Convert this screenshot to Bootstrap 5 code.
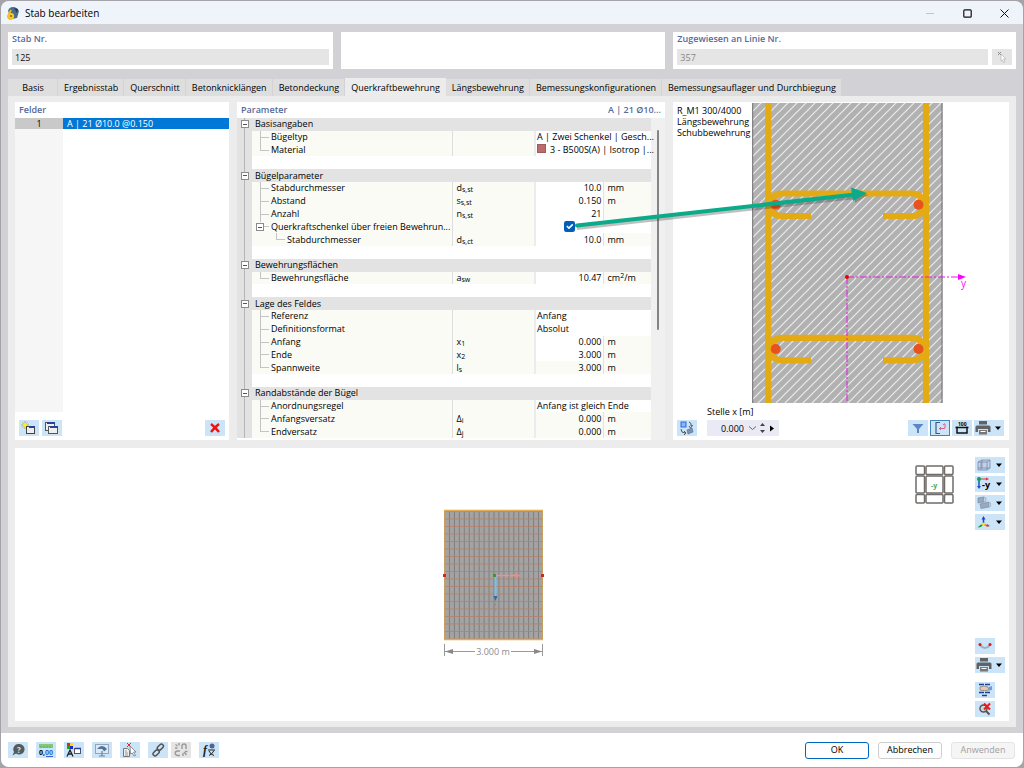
<!DOCTYPE html>
<html lang="de">
<head>
<meta charset="utf-8">
<meta name="viewport" content="width=device-width, initial-scale=1">
<title>Stab bearbeiten</title>
<link href="https://cdn.jsdelivr.net/npm/bootstrap@5.3.0/dist/css/bootstrap.min.css" rel="stylesheet">
<style>
  body { background: #a3a3a8; font-family: "Open Sans", "Noto Sans", sans-serif; font-size: 9px; line-height: 12px; color: #000; }
  .win { min-height: calc(100vh - 2px); margin: 1px; background: #d1d1d6; border-radius: 8px; overflow: hidden; }
  .title-strip { height: 23px; background: #eff4fb; padding-left: 6px; font-size: 10px; gap: 6px; }
  .title-strip button { width: 37px; height: 23px; border: 0; background: none; padding: 0; margin-left: -6px; }
  .title-strip button:first-of-type { margin-left: 0; }
  .win-buttons { display: flex; }
  .win-buttons button { margin-left: 0; }
  .cap { color: #566a9c; font-weight: 600; }
  .grid-top { display: grid; grid-template-columns: 325fr 325fr 343fr; column-gap: 8px; margin: 8px 7px 9px; }
  .box { background: #fff; }
  .grid-top .box { min-height: 37px; padding: 1px 4px 3px; }
  .fld { height: 16px; border: 0; background: #e5e5e5; padding: 0 3px; min-width: 0; color: #111; }
  .fld:disabled { color: #888; }
  .icon-btn { width: 20px; height: 16px; border: 0; padding: 0; background: #cce4f7; display: inline-flex; align-items: center; justify-content: center; flex: none; }
  .icon-btn.wide { width: 30px; justify-content: space-between; padding: 0 3px 0 1px; }
  .icon-btn.off { background: #e5e5e5; }
  .icon-btn.on { outline: 1px solid #3f85bd; outline-offset: -1px; }
  .nav-tabs { border: 0; margin: 0 7px; flex-wrap: nowrap; align-items: flex-end; }
  .nav-tabs .nav-link { border: 0; border-right: 1px solid #d3d3d5; border-radius: 0; margin: 0; height: 17px; padding: 3px 5px 2px 6px; background: #dedede; color: #000; line-height: 12px; white-space: nowrap; min-width: 50px; }
  .nav-tabs .nav-link.active { height: 18px; background: #ececec; border-color: #ececec; color: #000; }
  .pane { background: #ececec; margin: 0 7px; padding: 6px 7px; }
  .upper { position: relative; display: grid; grid-template-columns: 214fr 428fr 336fr; column-gap: 8px; margin-bottom: 8px; min-height: 338px; }
  .head-row { height: 16px; padding: 2px 4px; }
  .list-num { width: 48px; background: #f6f6f6; }
  .list-num div { background: #c9c9c9; height: 11px; line-height: 11px; }
  .list-sel { background: #0078d7; color: #fff; height: 11px; line-height: 11px; }
  .list-tools { gap: 3px; padding: 8px 4px 4px; }
  .tree { position: relative; z-index: 1; width: 100%; height: 320px; table-layout: fixed; line-height: 12px; background: #fff; }
  .tree td, .tree th { padding: 0; font-weight: 400; white-space: nowrap; vertical-align: middle; }
  .tree .gut { background: #e2e2e2 linear-gradient(90deg, #b5b5b5 1px, transparent 1px) 7px 0 no-repeat; }
  .tree .grp th { background: #e3e3e3; padding-left: 3px; }
  .tree .grp .gut { text-align: center; }
  .tree .item th { padding-left: 19px; background-color: #fafbf5; border-right: 1px solid #dedede;
    background-image: linear-gradient(#c4c4c4, #c4c4c4), linear-gradient(#c4c4c4, #c4c4c4); background-repeat: no-repeat;
    background-position: 8px 0, 8px 6px; background-size: 1px 100%, 9px 1px; }
  .tree .item.last th { background-size: 1px 7px, 9px 1px; }
  .tree .item.deep th { padding-left: 35px; background-position: 24px 0, 24px 6px; background-size: 1px 7px, 9px 1px; }
  .tree .item.fold th { padding-left: 4px; background-size: 1px 2px, 9px 1px; background-position: 8px 0, 8px 6px; }
  .tree .item.fold .fold-mark { margin-right: 7px; }
  .tree .sym { background: #fafbf5; border-right: 2px solid #ececec; padding-left: 3px; }
  .tree .val { text-align: right; padding-right: 2px; }
  .tree .unit { background: #fafbf5; border-left: 1px solid #e2e2e2; padding-left: 3px; }
  .tree .txt { padding-left: 1px; }
  .tree .ro { background: #fafbf5; }
  .tree sub { font-size: 7px; bottom: -1px; line-height: 0; }
  .tree sup { font-size: 7px; line-height: 0; top: -3px; }
  .fold-mark { display: inline-block; width: 8px; height: 8px; border: 1px solid #8c8c8c; vertical-align: middle; background: linear-gradient(#555, #555) center / 4px 1px no-repeat #fff; }
  .grp .fold-mark { display: block; margin: 0 auto; }
  .swatch { display: inline-block; width: 9px; height: 9px; background: #b96c6c; border: 1px solid #a05a5a; margin-right: 4px; }
  .check { width: 11px; height: 11px; margin: 0; border: 0; border-radius: 2px; display: block; margin-left: 28px; }
  .check:checked { background-color: #005fb8; }
  .rail { width: 14px; background: #f0f0f0; }
  .rail div { width: 2px; height: 200px; margin: 12px 0 0 6px; background: #858585; border-radius: 1px; }
  .over-arrow { position: absolute; z-index: 2; inset: 0; width: 100%; height: 100%; pointer-events: none; }
  .section-row { padding-top: 1px; }
  .section-note { width: 79px; padding: 2px 0 0 4px; line-height: 11px; white-space: nowrap; flex: none; }
  .section-bar { padding: 0 5px 4px 4px; gap: 10px; }
  .section-bar label { margin-bottom: 2px; }
  .right-tools { gap: 2px; }
  .spin { background: #eaeaf4; height: 16px; width: 72px; }
  .spin input { width: 40px; background: none; border: 0; text-align: right; padding: 0 3px 0 0; height: 16px; }
  .spin button { border: 0; background: none; padding: 0; width: 10px; height: 16px; display: flex; align-items: center; justify-content: center; }
  .view { position: relative; padding: 9px 4px 4px 0; min-height: 273px; }
  .scene { padding-bottom: 6px; }
  .tools { display: flex; flex-direction: column; gap: 3px; width: 30px; margin-left: 4px; }
  .tools .apart { margin-top: 6px; }
  .cube { position: absolute; top: 17px; right: 55px; }
  .foot { background: #fff; height: 34px; padding: 0 8px 0 7px; margin-top: 6px; gap: 8px; }
  .foot .unlink { margin-left: -5px; }
  .foot-btn { width: 64px; height: 17px; border: 1px solid #cfcfcf; border-radius: 3px; background: #fdfdfd; padding: 0; line-height: 12px; color: #000; margin-left: 1px; }
  .foot-btn.prime { border-color: #0067c0; }
  .foot-btn:disabled { background: #f5f5f5; color: #a0a0a0; border-color: #e4e4e4; }
</style>
</head>
<body>
<svg width="0" height="0" class="position-absolute" aria-hidden="true">
  <defs>
    <symbol id="caret" viewBox="0 0 6 4"><path d="M0 .5H6L3 4Z" fill="#000"/></symbol>
    <symbol id="printer" viewBox="0 0 16 14"><path d="M4 0h8v3.500H4zM2 4.500h12q1.500 0 1.500 1.500V11H13V8H3v3H.5V6Q.5 4.500 2 4.500z" fill="#5f6266"/><path d="M4 9h8v4.500H4z" fill="#777" /><path d="M5.500 10h5v1h-5z" fill="#fff"/></symbol>
  </defs>
</svg>
<div class="win d-flex flex-column">
  <header class="title-strip d-flex align-items-center">
    <svg width="12" height="14" viewBox="0 0 12 14"><path d="M1 5Q2 1 6 1t6 4L10 12 5 13z" fill="#4d6c8c"/><path d="M7 2l4 1-1 4z" fill="#243f5c"/><path d="M4 4L1.500 9a2.500 2.500 0 1 0 3-1" fill="none" stroke="#eab61d" stroke-width="2"/><circle cx="4" cy="10" r="3" fill="#f3c62c"/><circle cx="4" cy="10" r="1" fill="#8a6b10"/></svg>
    <span class="me-auto">Stab bearbeiten</span>
    <div class="win-buttons">
      <button type="button" class="m-0" aria-label="Minimieren"><svg width="9" height="9"><path d="M0 4.500H8" stroke="#c0c4ca"/></svg></button>
      <button type="button" class="m-0" aria-label="Maximieren"><svg width="9" height="9"><rect x=".8" y=".8" width="7.400" height="7.400" rx="1" fill="none" stroke="#111" stroke-width="1.200"/></svg></button>
      <button type="button" class="m-0" aria-label="Schließen"><svg width="9" height="9"><path d="M.5.5l8 8m0-8l-8 8" stroke="#111"/></svg></button>
    </div>
  </header>

  <div class="grid-top">
    <div class="box"><label class="cap d-block mb-1" for="stab">Stab Nr.</label><input id="stab" class="fld w-100 d-block" value="125"></div>
    <div class="box"></div>
    <div class="box"><label class="cap d-block mb-1" for="linie">Zugewiesen an Linie Nr.</label>
      <div class="d-flex gap-1"><input id="linie" class="fld flex-grow-1" value="357" disabled>
      <button type="button" class="icon-btn off" disabled aria-label="Auswählen"><svg width="14" height="14"><path d="M3 2l3 3m0-3L3 5" stroke="#888"/><path d="M6 4l5 5H8.500l1.500 3-1.500.5L7.500 10 6 11z" fill="#fff" stroke="#b5b5b5" stroke-width=".7"/></svg></button></div>
    </div>
  </div>

  <nav class="nav nav-tabs">
    <button type="button" class="nav-link text-center">Basis</button>
    <button type="button" class="nav-link">Ergebnisstab</button>
    <button type="button" class="nav-link">Querschnitt</button>
    <button type="button" class="nav-link">Betonknicklängen</button>
    <button type="button" class="nav-link">Betondeckung</button>
    <button type="button" class="nav-link active">Querkraftbewehrung</button>
    <button type="button" class="nav-link">Längsbewehrung</button>
    <button type="button" class="nav-link">Bemessungskonfigurationen</button>
    <button type="button" class="nav-link">Bemessungsauflager und Durchbiegung</button>
  </nav>

  <main class="pane flex-grow-1 d-flex flex-column">
    <div class="upper">
      <section class="box d-flex flex-column">
        <div class="head-row cap">Felder</div>
        <div class="d-flex flex-grow-1">
          <div class="list-num text-center"><div>1</div></div>
          <div class="flex-grow-1"><div class="list-sel px-1">A | 21 Ø10.0 @0.150</div></div>
        </div>
        <div class="list-tools d-flex">
          <button type="button" class="icon-btn" aria-label="Neu"><svg width="16" height="14"><path d="M4 0v8M0 4h8M1.200 1.200l5.600 5.600M6.800 1.200L1.200 6.800" stroke="#9b9b3c" stroke-width=".7"/><circle cx="4" cy="4" r="2" fill="#ffee22"/><rect x="5.500" y="5.500" width="8" height="7" fill="#eee" stroke="#444"/><path d="M8 6h6" stroke="#27409a" stroke-width="2"/></svg></button>
          <button type="button" class="icon-btn" aria-label="Kopieren"><svg width="16" height="14"><rect x="1.500" y="1.500" width="9" height="8" fill="#eee" stroke="#555"/><path d="M3 2h8" stroke="#27409a" stroke-width="2"/><rect x="4.500" y="5.500" width="9" height="7" fill="#eee" stroke="#555"/><path d="M6 6h8" stroke="#27409a" stroke-width="2"/></svg></button>
          <button type="button" class="icon-btn ms-auto" aria-label="Löschen"><svg width="10" height="10"><path d="M1 1q4 3 8 8M9 1Q5 4 1 9" stroke="#f01010" stroke-width="2.400" fill="none"/></svg></button>
        </div>
      </section>

      <section class="box d-flex flex-column">
        <div class="head-row cap d-flex justify-content-between"><span>Parameter</span><span>A | 21 Ø10...</span></div>
        <div class="d-flex flex-grow-1 align-items-start">
          <table class="tree flex-grow-1">
            <colgroup><col style="width:15px"><col><col style="width:82px"><col style="width:69px"><col style="width:47px"></colgroup>
            <tbody>
              <tr class="grp"><td class="gut"><span class="fold-mark"></span></td><th colspan="4">Basisangaben</th></tr>
              <tr class="item"><td class="gut"></td><th>Bügeltyp</th><td class="sym"></td><td class="txt" colspan="2">A | Zwei Schenkel | Gesch...</td></tr>
              <tr class="item last"><td class="gut"></td><th>Material</th><td class="sym"></td><td class="txt" colspan="2"><span class="swatch"></span>3 - B500S(A) | Isotrop |...</td></tr>
              <tr><td class="gut"></td><td colspan="4">&nbsp;</td></tr>
              <tr class="grp"><td class="gut"><span class="fold-mark"></span></td><th colspan="4">Bügelparameter</th></tr>
              <tr class="item"><td class="gut"></td><th>Stabdurchmesser</th><td class="sym">d<sub>s,st</sub></td><td class="val">10.0</td><td class="unit">mm</td></tr>
              <tr class="item"><td class="gut"></td><th>Abstand</th><td class="sym">s<sub>s,st</sub></td><td class="val">0.150</td><td class="unit">m</td></tr>
              <tr class="item"><td class="gut"></td><th>Anzahl</th><td class="sym">n<sub>s,st</sub></td><td class="val">21</td><td class="unit"></td></tr>
              <tr class="item fold"><td class="gut"></td><th><span class="fold-mark"></span><label for="qs">Querkraftschenkel über freien Bewehrun...</label></th><td class="sym"></td><td><input id="qs" type="checkbox" class="form-check-input check" checked></td><td></td></tr>
              <tr class="item deep"><td class="gut"></td><th>Stabdurchmesser</th><td class="sym">d<sub>s,ct</sub></td><td class="val">10.0</td><td class="unit">mm</td></tr>
              <tr><td class="gut"></td><td colspan="4">&nbsp;</td></tr>
              <tr class="grp"><td class="gut"><span class="fold-mark"></span></td><th colspan="4">Bewehrungsflächen</th></tr>
              <tr class="item last"><td class="gut"></td><th>Bewehrungsfläche</th><td class="sym">a<sub>sw</sub></td><td class="val">10.47</td><td class="unit">cm<sup>2</sup>/m</td></tr>
              <tr><td class="gut"></td><td colspan="4">&nbsp;</td></tr>
              <tr class="grp"><td class="gut"><span class="fold-mark"></span></td><th colspan="4">Lage des Feldes</th></tr>
              <tr class="item"><td class="gut"></td><th>Referenz</th><td class="sym"></td><td class="txt" colspan="2">Anfang</td></tr>
              <tr class="item"><td class="gut"></td><th>Definitionsformat</th><td class="sym"></td><td class="txt" colspan="2">Absolut</td></tr>
              <tr class="item"><td class="gut"></td><th>Anfang</th><td class="sym">x<sub>1</sub></td><td class="val">0.000</td><td class="unit">m</td></tr>
              <tr class="item"><td class="gut"></td><th>Ende</th><td class="sym">x<sub>2</sub></td><td class="val">3.000</td><td class="unit">m</td></tr>
              <tr class="item last"><td class="gut"></td><th>Spannweite</th><td class="sym">l<sub>s</sub></td><td class="val ro">3.000</td><td class="unit">m</td></tr>
              <tr><td class="gut"></td><td colspan="4">&nbsp;</td></tr>
              <tr class="grp"><td class="gut"><span class="fold-mark"></span></td><th colspan="4">Randabstände der Bügel</th></tr>
              <tr class="item"><td class="gut"></td><th>Anordnungsregel</th><td class="sym"></td><td class="txt" colspan="2">Anfang ist gleich Ende</td></tr>
              <tr class="item"><td class="gut"></td><th>Anfangsversatz</th><td class="sym">Δ<sub>i</sub></td><td class="val ro">0.000</td><td class="unit">m</td></tr>
              <tr class="item last"><td class="gut"></td><th>Endversatz</th><td class="sym">Δ<sub>j</sub></td><td class="val ro">0.000</td><td class="unit">m</td></tr>
            </tbody>
          </table>
          <div class="rail flex-shrink-0 align-self-stretch"><div></div></div>
        </div>
      </section>

      <section class="box d-flex flex-column">
        <div class="section-row d-flex flex-grow-1">
          <div class="section-note">R_M1 300/4000<br>Längsbewehrung<br>Schubbewehrung</div>
          <svg class="flex-grow-1" height="300" viewBox="0 0 257 300" preserveAspectRatio="xMinYMin meet">
            <defs><pattern id="hatch" width="9" height="9" patternUnits="userSpaceOnUse"><path d="M-1 10L10-1M-1 1L1-1M8 10l2-2" stroke="#ebebeb" stroke-width="1.200"/></pattern></defs>
            <rect x=".5" y="0" width="190" height="300" fill="#b1b1b1"/><rect x=".5" width="190" height="300" fill="url(#hatch)"/>
            <path d="M.7 0V300M190 0V300" stroke="#6e6e6e"/>
            <g fill="none" stroke="#e3aa14" stroke-width="6.200">
              <path d="M16.300 0V300M174 0V300"/>
              <path d="M59 113H30Q19 113 19 102T30 90.500H160Q171 90.500 171 102T160 113H131"/>
              <path d="M59 257.300H30Q19 257.300 19 246.300T30 234.800H160Q171 234.800 171 246.300T160 257.300H131"/>
            </g>
            <path d="M95 174V300" stroke="#e619e6" stroke-dasharray="7 2 2 2"/>
            <g fill="#e8521c"><circle cx="23.700" cy="101.700" r="5"/><circle cx="166.500" cy="101.700" r="5"/><circle cx="23.700" cy="246" r="5"/><circle cx="166.500" cy="246" r="5"/></g>
            <path d="M95 174H206" stroke="#e619e6" stroke-dasharray="7 2 2 2"/>
            <path d="M206 171l8 3-8 3z" fill="#f0f"/><circle cx="95" cy="174" r="2" fill="#e00"/>
            <text x="209" y="184" font-size="10" fill="#f0f">y</text>
          </svg>
        </div>
        <div class="section-bar d-flex align-items-end">
          <button type="button" class="icon-btn" aria-label="Ansicht wechseln"><svg width="16" height="14"><rect x="2" y="1" width="5" height="5" fill="#8cb4f0" stroke="#2b6be0"/><path d="M10 1q3 1 2 4l1.500-.500L11.500 7 10 5M2 8q0 4 4 4M5 10l2 2-2 2" fill="none" stroke="#555"/><path d="M8 9l5-2 1 4-5 2z" fill="#7c93b0" stroke="#47689a" stroke-width=".6"/></svg></button>
          <div class="me-auto"><label class="d-block" for="stelle">Stelle x [m]</label>
            <div class="spin d-flex"><input id="stelle" value="0.000">
              <button type="button" aria-label="Liste"><svg width="9" height="5"><path d="M1 .5l3.500 3L8 .5" fill="none" stroke="#666"/></svg></button>
              <button type="button" aria-label="Ändern"><svg width="5" height="10"><path d="M0 3L2.500 0 5 3zM0 7l2.500 3L5 7z" fill="#444"/></svg></button>
              <button type="button" aria-label="Weiter"><svg width="4" height="7"><path d="M0 0.500l4 3-4 3z" fill="#000"/></svg></button>
            </div></div>
          <div class="d-flex right-tools">
            <button type="button" class="icon-btn" aria-label="Filter"><svg width="12" height="11"><path d="M.5 1h11L7 6v4H5V6z" fill="#5b86c4"/></svg></button>
            <button type="button" class="icon-btn on" aria-label="Bewehrung"><svg width="16" height="14"><path d="M8 1.500H4V12.500H8" fill="none" stroke="#3f5a86" stroke-width="1.200"/><path d="M7 7.500H13M13 3V7M8.500 6v3M11 4l2-1.500" stroke="#dd5f8d" fill="none"/></svg></button>
            <button type="button" class="icon-btn" aria-label="Maße"><svg width="16" height="14"><path d="M1.500 6.500H14.500M3 5.500V12H13V5.500" fill="none" stroke="#111" stroke-width="1.500"/><text x="4" y="4.500" font-size="5" font-weight="700">100</text></svg></button>
            <button type="button" class="icon-btn wide" aria-label="Drucken"><svg width="16" height="14"><use href="#printer"/></svg><svg width="6" height="4"><use href="#caret"/></svg></button>
          </div>
        </div>
      </section>

      <svg class="over-arrow" viewBox="0 0 994 338" aria-hidden="true">
        <g transform="translate(1 2)" opacity=".3"><path d="M561 124L840 93" stroke="#333" stroke-width="4"/><path d="M837 86l15 5-13 8z" fill="#333"/></g>
        <path d="M562 123.500L840 92.500" stroke="#0bab8a" stroke-width="4" stroke-linecap="round"/><path d="M836 85.500L852 91 838 99z" fill="#0bab8a"/>
      </svg>
    </div>

    <section class="box view flex-grow-1 d-flex">
      <div class="scene flex-grow-1 d-flex align-items-center justify-content-center">
        <svg width="105" height="150" viewBox="0 0 105 150">
          <defs>
            <pattern id="bars" x="3" width="4.950" height="130" patternUnits="userSpaceOnUse"><path d="M.5 0V130" stroke="#7a7a7a" stroke-width=".9"/></pattern>
            <pattern id="rows" y="2" width="99" height="7.500" patternUnits="userSpaceOnUse"><path d="M0 .5H99" stroke="#b5806c" stroke-width=".9"/></pattern>
          </defs>
          <rect x="3" y="1" width="99" height="130" fill="#a3a3a3"/>
          <rect x="3" y="1" width="99" height="130" fill="url(#bars)"/><rect x="3" y="1" width="99" height="130" fill="url(#rows)"/>
          <path d="M3.500 1V131M101.500 1V131" stroke="#c49f62"/><path d="M3 1.500H102M3 130.500H102" stroke="#e2ad4d" stroke-width="1.500"/>
          <path d="M55 66.500H78" stroke="#f09090" stroke-width="1.500" stroke-dasharray="6 1"/><path d="M75 64.500l5 2-5 2z" fill="#e88"/>
          <path d="M54.500 67V88" stroke="#75c2ee" stroke-width="2"/><path d="M52.500 87h4l-2 5z" fill="#2b6cb0"/><path d="M54.500 94V102" stroke="#7c99b5" stroke-dasharray="3 2"/>
          <rect x="52" y="65" width="3" height="3" fill="#3c9a1c"/><rect x="2" y="65" width="3" height="3" fill="#e02020"/><rect x="100" y="65" width="3" height="3" fill="#e02020"/>
          <path d="M3.500 135V147M101.500 135V147M4 142.500H34M70 142.500H101" stroke="#9a9a9a"/><path d="M4 142.500l8-2.500v5zM101 142.500l-8-2.500v5z" fill="#888"/>
          <text x="52" y="146" font-size="9" text-anchor="middle" fill="#8c8c8c">3.000 m</text>
        </svg>
      </div>
      <svg class="cube" width="39" height="39" viewBox="0 0 39 39" fill="none" stroke="#6f6c69" stroke-width="1.500"><rect x="1" y="1" width="8.500" height="8.500" rx="1"/><rect x="11" y="1" width="17" height="8.500" rx="1"/><rect x="29.500" y="1" width="8.500" height="8.500" rx="1"/><rect x="1" y="11" width="8.500" height="17" rx="1"/><rect x="11" y="11" width="17" height="17" rx="1"/><rect x="29.500" y="11" width="8.500" height="17" rx="1"/><rect x="1" y="29.500" width="8.500" height="8.500" rx="1"/><rect x="11" y="29.500" width="17" height="8.500" rx="1"/><rect x="29.500" y="29.500" width="8.500" height="8.500" rx="1"/><text x="16" y="23" font-size="7" font-weight="700" fill="#55a94e" stroke="none">-y</text></svg>
      <div class="tools">
        <button type="button" class="icon-btn wide" aria-label="Darstellung"><svg width="16" height="14"><path d="M2 4l4-2h8v8l-3 2H2zM2 4h9v8M11 4l3-2M6 2v8H2M6 10h8M5 4v8" fill="#b9c8de" fill-opacity=".6" stroke="#7e88a8" stroke-width=".8"/></svg><svg width="6" height="4"><use href="#caret"/></svg></button>
        <button type="button" class="icon-btn wide" aria-label="Ansicht -y"><svg width="17" height="16"><path d="M3 3H10" stroke="#d33"/><path d="M10 1.500l3 1.500-3 1.500z" fill="#d33"/><path d="M3 4V11" stroke="#1f4fd0" stroke-width="1.500"/><path d="M1 10h4l-2 3z" fill="#1f4fd0"/><circle cx="3" cy="3" r="2" fill="#15a050"/><text x="6" y="12" font-size="9" font-weight="700">-y</text></svg><svg width="6" height="4"><use href="#caret"/></svg></button>
        <button type="button" class="icon-btn wide" aria-label="Flächen"><svg width="16" height="14"><path d="M2 2l6-1v5L2 7zM4 8l9-2v5l-8 1.500z" fill="#98a9bd" stroke="#7d8ea5" stroke-width=".7"/><path d="M8 1l2 1v3.500L8 6M13 6l1.500 1v3.500L13 11" fill="#c4d0de" stroke="#8496ad" stroke-width=".5"/></svg><svg width="6" height="4"><use href="#caret"/></svg></button>
        <button type="button" class="icon-btn wide" aria-label="Achsen"><svg width="16" height="14"><path d="M7.500 9V4" stroke="#2141d6" stroke-width="1.500"/><path d="M5.500 4.500l2-3.500 2 3.500z" fill="#2141d6"/><path d="M7.500 9l-3 2" stroke="#129c38" stroke-width="1.200"/><path d="M5 9.500l.5 2.500-4 .5z" fill="#129c38"/><path d="M7.500 9.500l4 1" stroke="#dd3b1b" stroke-width="1.200"/><path d="M11 9l3 2-3.500 1z" fill="#dd3b1b"/><circle cx="7.500" cy="9" r="1.500" fill="#ffe02a"/></svg><svg width="6" height="4"><use href="#caret"/></svg></button>
        <button type="button" class="icon-btn mt-auto" aria-label="Verlauf"><svg width="16" height="14"><path d="M3 6q5 6 10 0" fill="none" stroke="#9bb0cc" stroke-width="2"/><circle cx="3" cy="5.500" r="1.500" fill="#e01818"/><circle cx="13" cy="5.500" r="1.500" fill="#e01818"/></svg></button>
        <button type="button" class="icon-btn wide" aria-label="Drucken"><svg width="16" height="14"><use href="#printer"/></svg><svg width="6" height="4"><use href="#caret"/></svg></button>
        <button type="button" class="icon-btn apart" aria-label="Tabelle"><svg width="16" height="14"><path d="M2 1.500H14M2 9.500H14M5 12.500H11" stroke="#1d3f9c" stroke-width="1.400" stroke-dasharray="5 1"/><path d="M3 4q4-2 8 0l1 3q-4 1.500-9 0z" fill="#e8c9ae" stroke="#777" stroke-width=".7"/><path d="M12 4l3-1v4l-3 .5z" fill="#6d9cd6"/></svg></button>
        <button type="button" class="icon-btn" aria-label="Zurücksetzen"><svg width="16" height="14"><circle cx="6.500" cy="6.500" r="3.500" fill="#cfd6dc" stroke="#555" stroke-width="1.500"/><path d="M9 9l3.500 3.500" stroke="#555" stroke-width="2"/><path d="M7 1.500l6 6m0-6l-6 6" stroke="#f01818" stroke-width="2"/></svg></button>
      </div>
    </section>
  </main>

  <footer class="foot d-flex align-items-center">
    <button type="button" class="icon-btn" aria-label="Hilfe"><svg width="14" height="14"><path d="M8 1a5.300 5.300 0 1 1-3 9.500L1.500 12.500 3 9A5.300 5.300 0 0 1 8 1z" fill="#555a5f"/><text x="6" y="9.500" font-size="8" font-weight="700" fill="#cce4f7">?</text></svg></button>
    <button type="button" class="icon-btn" aria-label="Einheiten"><svg width="16" height="14"><path d="M1 1h14v4H1z" fill="#80ca76"/><path d="M3 3v2M6 3v2M9 3v2M12 3v2" stroke="#4f9d49" stroke-width=".7"/><text x="1" y="12" font-size="7" font-weight="700">0,<tspan fill="#2e6ad1">00</tspan></text><path d="M8 13.500h7" stroke="#2e6ad1"/></svg></button>
    <button type="button" class="icon-btn" aria-label="Farben"><svg width="16" height="14"><path d="M1 0h3v3H1z" fill="#e22"/><path d="M4 0h3v3H4z" fill="#fd0"/><path d="M1 3h3v3H1z" fill="#1a1"/><path d="M4 3h3v3H4z" fill="#22d"/><path d="M1 13.500L4 7 7 13.500M2 11h4" fill="none" stroke="#222" stroke-width="1.300"/><rect x="8.500" y="5.500" width="6" height="5" fill="#fff" stroke="#555"/><path d="M9 5.500h6" stroke="#27409a" stroke-width="1.500"/></svg></button>
    <button type="button" class="icon-btn" aria-label="Anzeige"><svg width="16" height="14"><rect x="1.500" y="1.500" width="13" height="9" fill="#dce9f5" stroke="#93a6b8"/><path d="M3 6q5-6 10 0l-3 2.500Q9 5 6 6z" fill="#4f7396"/><path d="M8 8v5M5 13h6" stroke="#68839c" stroke-width="1.200"/></svg></button>
    <button type="button" class="icon-btn" aria-label="Auswahl"><svg width="16" height="14"><path d="M5 0l4 4m0-4L5 4" stroke="#e22"/><path d="M1.500 5.500h4l2 2v6h-6z" fill="#eee" stroke="#777"/><path d="M3 8h2M3 10h3M3 12h3" stroke="#777" stroke-width=".7"/><path d="M8 3l6 6h-2.500l2 3.500-1.500.5-1.800-3L8.500 11z" fill="#fff" stroke="#777" stroke-width=".8"/></svg></button>
    <button type="button" class="icon-btn" aria-label="Verknüpfen"><svg width="14" height="14" fill="none" stroke="#555" stroke-width="1.500"><rect x="-3" y="-2" width="7" height="4" rx="2" transform="translate(9 4.500) rotate(-45)"/><rect x="-4" y="-2" width="7" height="4" rx="2" transform="translate(5.500 9.500) rotate(-45)"/></svg></button>
    <button type="button" class="icon-btn off unlink" disabled aria-label="Trennen"><svg width="14" height="14" fill="none" stroke="#999" stroke-width="1.400"><path d="M8 6V3a2 2 0 0 1 4 0V6M6 8H3.500a2 2 0 0 0 0 4.500H6M1.500 1.500l2 1.500M1 5h2.500M5 0v2.500M10 9l2.500 3M9 10v3M11 8.500h2.500"/></svg></button>
    <button type="button" class="icon-btn me-auto" aria-label="Formel"><svg width="16" height="14"><text x="2" y="11" font-size="12" font-style="italic" font-weight="700" font-family="Liberation Serif, serif" fill="#222">f</text><path d="M7 7h7M8 12.500q3-1 5-5M8 8q2 4 5 4.500" stroke="#222" fill="none"/><circle cx="11" cy="3" r="2.500" fill="#526590"/></svg></button>
    <button type="button" class="foot-btn prime">OK</button>
    <button type="button" class="foot-btn">Abbrechen</button>
    <button type="button" class="foot-btn" disabled>Anwenden</button>
  </footer>
</div>
<script src="https://cdn.jsdelivr.net/npm/bootstrap@5.3.0/dist/js/bootstrap.bundle.min.js"></script>
</body>
</html>
